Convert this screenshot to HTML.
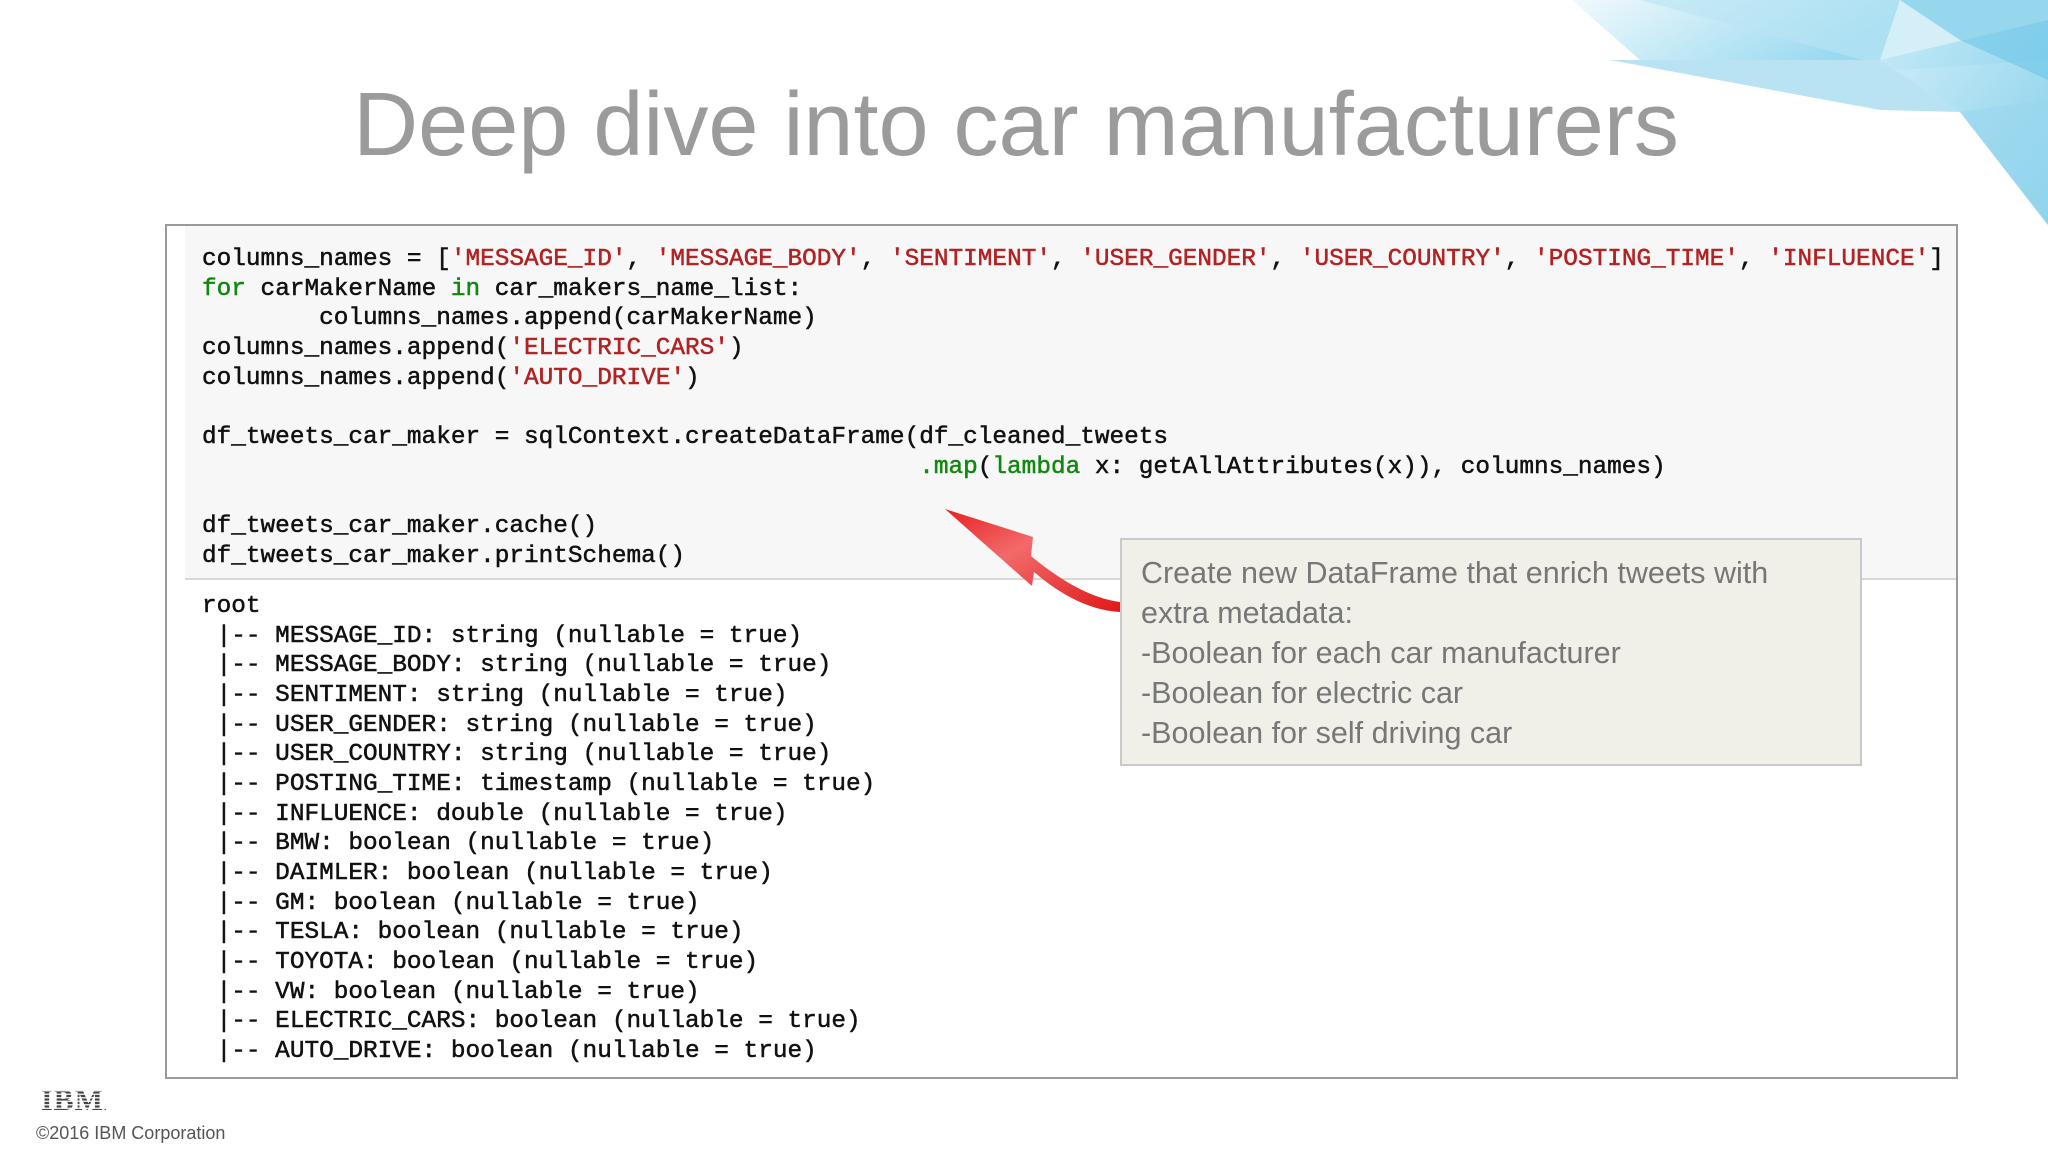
<!DOCTYPE html>
<html><head><meta charset="utf-8"><style>
html,body{margin:0;padding:0}
body{width:2048px;height:1152px;position:relative;overflow:hidden;background:#fff;font-family:"Liberation Sans",sans-serif}
.title{position:absolute;left:0;width:2032px;text-align:center;top:70px;font-size:90px;color:#9b9b9b;line-height:110px}
.box{position:absolute;left:165px;top:224px;width:1789px;height:851px;border:2px solid #9a9a9a;background:#fff}
.inp{position:absolute;left:185px;top:226px;width:1771px;height:352px;background:#f7f7f7;border-bottom:2px solid #d8d8d8}
pre{position:absolute;margin:0;font-family:"Liberation Mono",monospace;font-size:24.4px;line-height:29.65px;color:#111;white-space:pre;-webkit-text-stroke:0.5px #111}
.s{color:#b22222;-webkit-text-stroke:0.5px #b22222}.k{color:#118811;-webkit-text-stroke:0.5px #118811}
.call{position:absolute;left:1120px;top:538px;width:742px;height:228px;background:#f0efe8;border:2px solid #c9c9c9;box-sizing:border-box}
.ct{position:absolute;left:1141px;top:553px;font-size:30.5px;line-height:40px;color:#777;white-space:pre}
.copy{position:absolute;left:36px;top:1123px;font-size:18px;color:#555}
</style></head><body>
<svg style="position:absolute;left:0;top:0" width="2048" height="1152">
<defs>
<linearGradient id="g1" x1="0" y1="0" x2="1" y2="0.3"><stop offset="0" stop-color="#eef8fc"/><stop offset="1" stop-color="#7fd0ec"/></linearGradient>
<linearGradient id="g2" x1="0" y1="0" x2="1" y2="1"><stop offset="0" stop-color="#c5eaf7"/><stop offset="1" stop-color="#55bde3"/></linearGradient>
</defs>
<polygon points="1572,0 1900,0 1880,60 1640,60" fill="url(#g1)" opacity="0.8"/>
<polygon points="1610,60 1880,60 1960,112 1880,110" fill="#a8dcf0" opacity="0.8"/>
<polygon points="1640,0 2048,0 2048,60 1900,70" fill="#b9e4f4" opacity="0.6"/>
<polygon points="1880,60 2048,20 2048,225 1960,112" fill="url(#g2)" opacity="0.75"/>
<polygon points="1900,0 2048,0 2048,80 1960,40" fill="#6cc6e8" opacity="0.6"/>
<polygon points="1960,112 2048,100 2048,225" fill="#9ad7ee" opacity="0.7"/>
</svg>
<div class="title">Deep dive into car manufacturers</div>
<div class="box"></div>
<div class="inp"></div>
<pre style="left:202px;top:245px">columns_names = [<span class="s">'MESSAGE_ID'</span>, <span class="s">'MESSAGE_BODY'</span>, <span class="s">'SENTIMENT'</span>, <span class="s">'USER_GENDER'</span>, <span class="s">'USER_COUNTRY'</span>, <span class="s">'POSTING_TIME'</span>, <span class="s">'INFLUENCE'</span>]
<span class="k">for</span> carMakerName <span class="k">in</span> car_makers_name_list:
        columns_names.append(carMakerName)
columns_names.append(<span class="s">'ELECTRIC_CARS'</span>)
columns_names.append(<span class="s">'AUTO_DRIVE'</span>)

df_tweets_car_maker = sqlContext.createDataFrame(df_cleaned_tweets
                                                 <span class="k">.map</span>(<span class="k">lambda</span> x: getAllAttributes(x)), columns_names)

df_tweets_car_maker.cache()
df_tweets_car_maker.printSchema()</pre>
<pre style="left:202px;top:592px">root
 |-- MESSAGE_ID: string (nullable = true)
 |-- MESSAGE_BODY: string (nullable = true)
 |-- SENTIMENT: string (nullable = true)
 |-- USER_GENDER: string (nullable = true)
 |-- USER_COUNTRY: string (nullable = true)
 |-- POSTING_TIME: timestamp (nullable = true)
 |-- INFLUENCE: double (nullable = true)
 |-- BMW: boolean (nullable = true)
 |-- DAIMLER: boolean (nullable = true)
 |-- GM: boolean (nullable = true)
 |-- TESLA: boolean (nullable = true)
 |-- TOYOTA: boolean (nullable = true)
 |-- VW: boolean (nullable = true)
 |-- ELECTRIC_CARS: boolean (nullable = true)
 |-- AUTO_DRIVE: boolean (nullable = true)</pre>
<div class="call"></div>
<div class="ct">Create new DataFrame that enrich tweets with
extra metadata:
-Boolean for each car manufacturer
-Boolean for electric car
-Boolean for self driving car</div>
<svg style="position:absolute;left:0;top:0" width="2048" height="1152">
<defs><linearGradient id="ar" x1="0" y1="0" x2="1" y2="1"><stop offset="0" stop-color="#e82020"/><stop offset="0.4" stop-color="#f26a6a"/><stop offset="1" stop-color="#e01818"/></linearGradient></defs>
<path d="M945,509 L1033,537 L1031,556 C1060,580 1090,598 1120,602 L1120,612 C1085,610 1055,590 1034,572 L1032,586 Z" fill="url(#ar)"/>
</svg>
<div style="position:absolute;left:41px;top:1084px;font-family:'Liberation Serif',serif;font-weight:bold;font-size:30px;color:#444;letter-spacing:1px">IBM<span style="font-size:10px">.</span></div>
<div style="position:absolute;left:40px;top:1088px;width:76px;height:24px;background:repeating-linear-gradient(transparent 0 2px,rgba(255,255,255,.85) 2px 3.5px)"></div>
<div class="copy">©2016 IBM Corporation</div>
</body></html>
